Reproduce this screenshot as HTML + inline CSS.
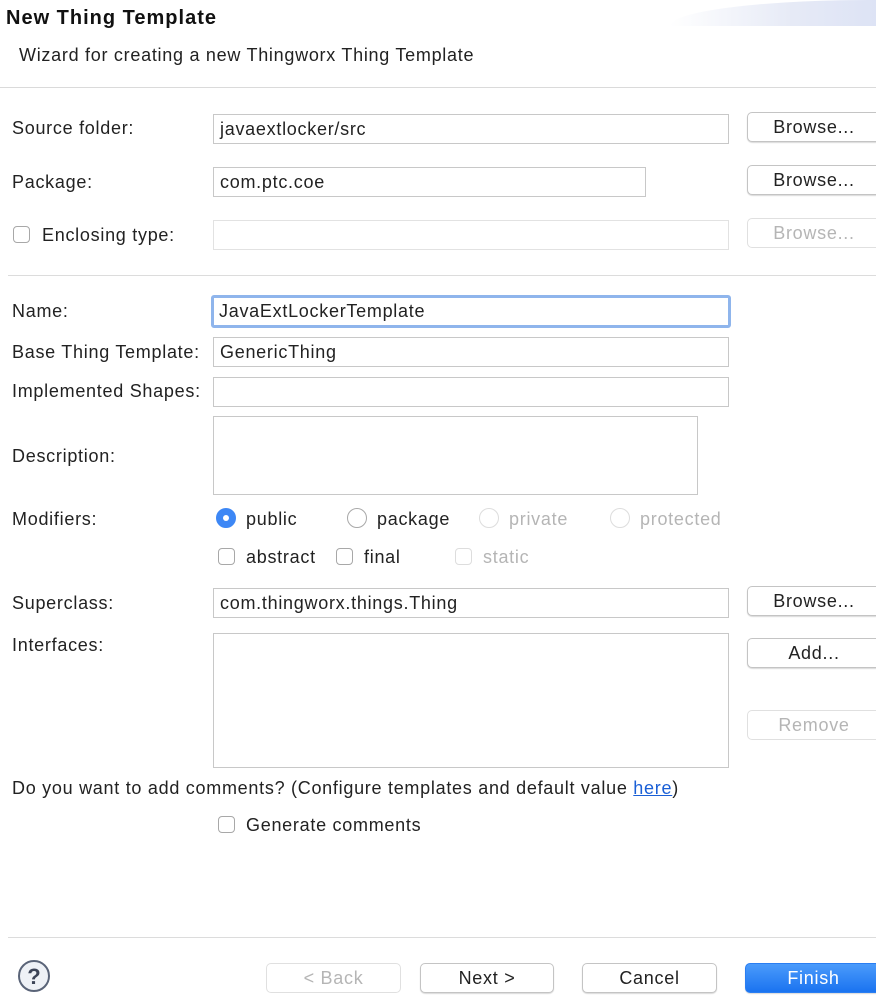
<!DOCTYPE html>
<html><head><style>
body{margin:0;width:876px;height:999px;background:#fff;font-family:"Liberation Sans",sans-serif;font-size:18px;letter-spacing:0.72px;color:#222;position:relative;overflow:hidden}
.a{position:absolute;white-space:nowrap}
.f{position:absolute;border:1px solid #c8c8c8;background:#fff;box-sizing:border-box;padding-left:6px;line-height:28px;font-size:18px}
.b{position:absolute;border:1px solid #c4c4c4;border-radius:5px;background:#fff;box-sizing:border-box;text-align:center;line-height:28px;box-shadow:0 1px 1px rgba(0,0,0,.15)}
.dis{color:#b5b5b5;border-color:#e0e0e0;box-shadow:none}
.cb{position:absolute;width:17px;height:17px;border:1px solid #a8a8a8;border-radius:4px;box-sizing:border-box;background:#fff}
.rd{position:absolute;width:20px;height:20px;border:1px solid #a8a8a8;border-radius:50%;box-sizing:border-box;background:#fff}
.hr{position:absolute;left:8px;right:0;height:1px;background:#dcdcdc}
</style></head><body>
<div class="a" style="left:670px;top:0;width:206px;height:26px;background:linear-gradient(90deg,#fff,#e6eaf6 60%,#dde3f5);border-top-left-radius:200px 26px"></div>
<div class="a" style="left:6px;top:7px;font-weight:bold;font-size:20px;letter-spacing:1px;color:#111">New Thing Template</div>
<div class="a" style="left:19px;top:45px">Wizard for creating a new Thingworx Thing Template</div>
<div class="a" style="left:0;top:87px;width:876px;height:1px;background:#dadada"></div>

<div class="a" style="left:12px;top:118px">Source folder:</div>
<div class="f" style="left:213px;top:114px;width:516px;height:30px">javaextlocker/src</div>
<div class="b" style="left:747px;top:112px;width:134px;height:30px">Browse...</div>

<div class="a" style="left:12px;top:172px">Package:</div>
<div class="f" style="left:213px;top:167px;width:433px;height:30px">com.ptc.coe</div>
<div class="b" style="left:747px;top:165px;width:134px;height:30px">Browse...</div>

<div class="cb" style="left:13px;top:226px"></div>
<div class="a" style="left:42px;top:225px">Enclosing type:</div>
<div class="f" style="left:213px;top:220px;width:516px;height:30px;border-color:#e2e2e2"></div>
<div class="b dis" style="left:747px;top:218px;width:134px;height:30px">Browse...</div>

<div class="hr" style="top:275px"></div>

<div class="a" style="left:12px;top:301px">Name:</div>
<div class="f" style="left:211px;top:295px;width:520px;height:33px;border:3px solid #8fb5ec;border-radius:3px;padding-left:5px;line-height:27px">JavaExtLockerTemplate</div>
<div class="a" style="left:12px;top:342px">Base Thing Template:</div>
<div class="f" style="left:213px;top:337px;width:516px;height:30px">GenericThing</div>
<div class="a" style="left:12px;top:381px">Implemented Shapes:</div>
<div class="f" style="left:213px;top:377px;width:516px;height:30px"></div>
<div class="a" style="left:12px;top:446px">Description:</div>
<div class="f" style="left:213px;top:416px;width:485px;height:79px"></div>

<div class="a" style="left:12px;top:509px">Modifiers:</div>
<div class="rd" style="left:216px;top:508px;background:#3d87f5;border-color:#3d87f5"><div style="position:absolute;left:6px;top:6px;width:6px;height:6px;border-radius:50%;background:#fff"></div></div>
<div class="a" style="left:246px;top:509px">public</div>
<div class="rd" style="left:347px;top:508px"></div>
<div class="a" style="left:377px;top:509px">package</div>
<div class="rd" style="left:479px;top:508px;border-color:#ddd"></div>
<div class="a" style="left:509px;top:509px;color:#b5b5b5">private</div>
<div class="rd" style="left:610px;top:508px;border-color:#ddd"></div>
<div class="a" style="left:640px;top:509px;color:#b5b5b5">protected</div>

<div class="cb" style="left:218px;top:548px"></div>
<div class="a" style="left:246px;top:547px">abstract</div>
<div class="cb" style="left:336px;top:548px"></div>
<div class="a" style="left:364px;top:547px">final</div>
<div class="cb" style="left:455px;top:548px;border-color:#ddd"></div>
<div class="a" style="left:483px;top:547px;color:#b5b5b5">static</div>

<div class="a" style="left:12px;top:593px">Superclass:</div>
<div class="f" style="left:213px;top:588px;width:516px;height:30px">com.thingworx.things.Thing</div>
<div class="b" style="left:747px;top:586px;width:134px;height:30px">Browse...</div>

<div class="a" style="left:12px;top:635px">Interfaces:</div>
<div class="f" style="left:213px;top:633px;width:516px;height:135px"></div>
<div class="b" style="left:747px;top:638px;width:134px;height:30px">Add...</div>
<div class="b dis" style="left:747px;top:710px;width:134px;height:30px">Remove</div>

<div class="a" style="left:12px;top:778px">Do you want to add comments? (Configure templates and default value <span style="color:#1a5fd6;text-decoration:underline">here</span>)</div>
<div class="cb" style="left:218px;top:816px"></div>
<div class="a" style="left:246px;top:815px">Generate comments</div>

<div class="hr" style="top:937px"></div>

<div class="a" style="left:18px;top:960px;width:32px;height:32px;border:2px solid #5a6478;border-radius:50%;box-sizing:border-box;background:#eef1f6;text-align:center;line-height:29px;font-weight:bold;font-size:22px;color:#3c4457;letter-spacing:0">?</div>
<div class="b dis" style="left:266px;top:963px;width:135px;height:30px">&lt; Back</div>
<div class="b" style="left:420px;top:963px;width:134px;height:30px">Next &gt;</div>
<div class="b" style="left:582px;top:963px;width:135px;height:30px">Cancel</div>
<div class="b" style="left:745px;top:963px;width:137px;height:30px;background:linear-gradient(#4b9bfb,#1a73f0);border-color:#2a7ef2;color:#fff">Finish</div>
</body></html>
